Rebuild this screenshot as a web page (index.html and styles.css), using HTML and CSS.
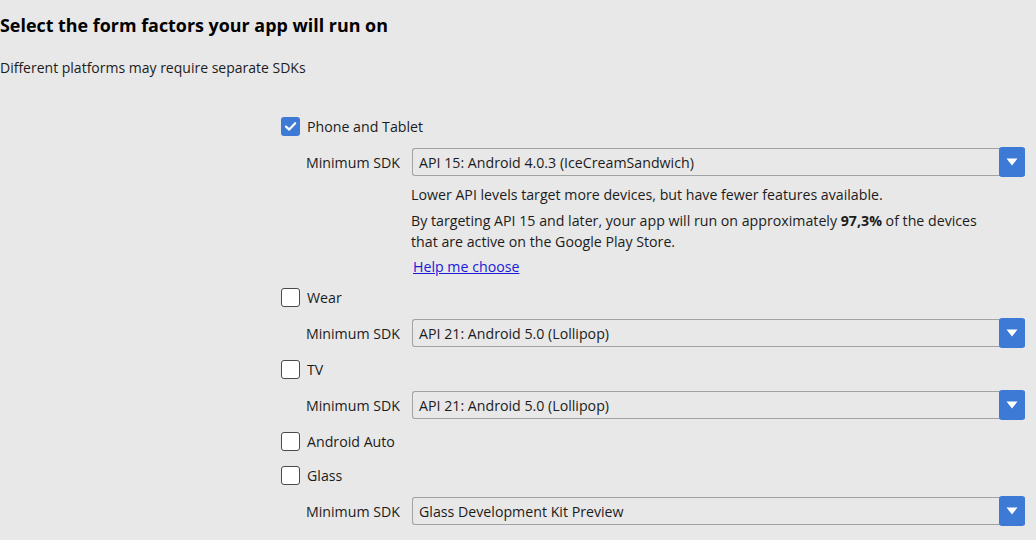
FILE: index.html
```html
<!DOCTYPE html>
<html>
<head>
<meta charset="utf-8">
<link rel="stylesheet" href="styles.css">
</head>
<body>
<div class="page">
  <h1 class="title">Select the form factors your app will run on</h1>
  <p class="subtitle">Different platforms may require separate SDKs</p>
  <div class="options">
    <div class="check-row">
      <span class="box checked"><svg viewBox="0 0 19 19" width="19" height="19"><path d="M5 9.6 L8.2 12.6 L14.2 6.2" fill="none" stroke="#fff" stroke-width="2.2" stroke-linecap="round" stroke-linejoin="round"/></svg></span>
      <span class="label">Phone and Tablet</span>
    </div>
    <div class="sdk-row">
      <span class="sdk-label">Minimum SDK</span>
      <div class="select"><span class="select-text">API 15: Android 4.0.3 (IceCreamSandwich)</span><span class="arrow"><svg viewBox="0 0 12 8" width="12" height="8"><path d="M0.5 0.5 H11.5 L6 7.5 Z" fill="#fff"/></svg></span></div>
    </div>
    <div class="info">
      <p class="info-line">Lower API levels target more devices, but have fewer features available.</p>
      <p class="info-line">By targeting API 15 and later, your app will run on approximately <b>97,3%</b> of the devices<br>that are active on the Google Play Store.</p>
      <p class="info-line help-line"><a class="help" href="#">Help me choose</a></p>
    </div>
    <div class="check-row">
      <span class="box"></span>
      <span class="label">Wear</span>
    </div>
    <div class="sdk-row">
      <span class="sdk-label">Minimum SDK</span>
      <div class="select"><span class="select-text">API 21: Android 5.0 (Lollipop)</span><span class="arrow"><svg viewBox="0 0 12 8" width="12" height="8"><path d="M0.5 0.5 H11.5 L6 7.5 Z" fill="#fff"/></svg></span></div>
    </div>
    <div class="check-row">
      <span class="box"></span>
      <span class="label">TV</span>
    </div>
    <div class="sdk-row">
      <span class="sdk-label">Minimum SDK</span>
      <div class="select"><span class="select-text">API 21: Android 5.0 (Lollipop)</span><span class="arrow"><svg viewBox="0 0 12 8" width="12" height="8"><path d="M0.5 0.5 H11.5 L6 7.5 Z" fill="#fff"/></svg></span></div>
    </div>
    <div class="check-row">
      <span class="box"></span>
      <span class="label">Android Auto</span>
    </div>
    <div class="check-row">
      <span class="box"></span>
      <span class="label">Glass</span>
    </div>
    <div class="sdk-row">
      <span class="sdk-label">Minimum SDK</span>
      <div class="select"><span class="select-text">Glass Development Kit Preview</span><span class="arrow"><svg viewBox="0 0 12 8" width="12" height="8"><path d="M0.5 0.5 H11.5 L6 7.5 Z" fill="#fff"/></svg></span></div>
    </div>
  </div>
</div>
</body>
</html>
```

FILE: styles.css
```css
html, body {
  margin: 0;
  padding: 0;
  background: #e8e8e8;
}
body {
  width: 1036px;
  height: 540px;
  overflow: hidden;
  font-family: "Open Sans", "Noto Sans", sans-serif;
  font-size: 14.2px;
  color: #1c1c1c;
}
.page {
  padding: 14px 11px 0 0;
}
.title {
  margin: 0;
  font-size: 17.9px;
  font-weight: 700;
  line-height: 22px;
  color: #000;
}
.subtitle {
  margin: 22px 0 0 0;
  line-height: 20px;
  font-size: 14px;
}
.options {
  margin: 35px 0 0 281px;
  display: flex;
  flex-direction: column;
  gap: 8px;
}
.check-row {
  display: flex;
  align-items: center;
  height: 26px;
}
.box {
  box-sizing: border-box;
  width: 19px;
  height: 19px;
  border: 1px solid #4a4a4a;
  border-radius: 3px;
  background: #fff;
  display: flex;
}
.box.checked {
  border: none;
  background: #3d7ad6;
}
.label {
  margin-left: 7px;
}
.sdk-row {
  display: flex;
  align-items: center;
  height: 30px;
  padding-left: 25px;
}
.sdk-label {
  width: 106px;
  flex: none;
}
.select {
  flex: 1;
  position: relative;
  box-sizing: border-box;
  height: 28px;
  border: 1px solid #a3a3a3;
  border-right: none;
  border-radius: 3px 0 0 3px;
  display: flex;
  align-items: center;
  padding-left: 6px;
}
.arrow {
  position: absolute;
  right: 0;
  top: -2px;
  width: 26px;
  height: 30px;
  background: #3d7ad6;
  border-radius: 3px;
  display: flex;
  align-items: center;
  justify-content: center;
}
.info {
  margin: -1px 0 0 130px;
  display: flex;
  flex-direction: column;
  gap: 5px;
}
.info-line {
  margin: 0;
  line-height: 21px;
}
.help-line {
  line-height: 19px;
}
.help {
  color: #1a1ad8;
  margin-left: 2px;
}
```
